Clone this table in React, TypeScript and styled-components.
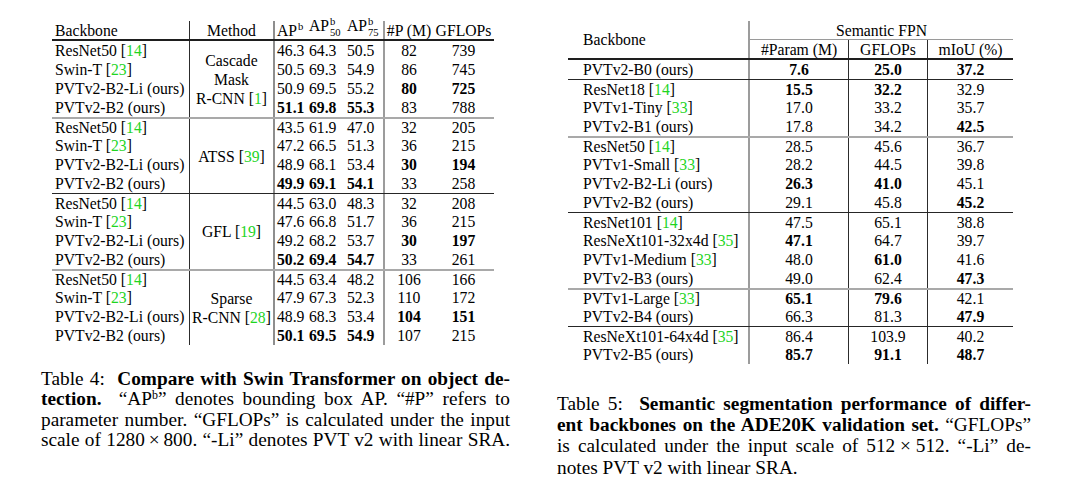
import React from 'react';
import styled, { createGlobalStyle } from 'styled-components';

type Rule = 'none' | 'dark' | 'soft';

const GlobalStyle = createGlobalStyle`
  html, body { margin: 0; padding: 0; background: #ffffff; }
  body {
    font-family: "Liberation Serif", "Times New Roman", serif;
    color: #000000;
  }
`;

const ruleCss = (r: Rule) =>
  r === 'dark' ? '1px solid #262626' : r === 'soft' ? '2px solid #a9a9a9' : 'none';
const ruleWidth = (r: Rule) => (r === 'dark' ? 1 : r === 'soft' ? 2 : 0);

const Page = styled.div`
  display: flex;
  align-items: flex-start;
  gap: 47px;
  width: 1078px;
  height: 486px;
  box-sizing: border-box;
  padding: 21px 0 0 41px;
  overflow: hidden;
`;

const Column = styled.div<{ $width: number }>`
  display: flex;
  flex-direction: column;
  width: ${p => p.$width}px;
`;

const TableBox = styled.div<{ $width: number; $indent: number }>`
  display: flex;
  flex-direction: column;
  width: ${p => p.$width}px;
  margin-left: ${p => p.$indent}px;
  font-size: 15.7px;
  line-height: 19px;
`;

const Band = styled.div<{ $cols: string; $rows: string; $rule: Rule; $under?: boolean }>`
  display: grid;
  grid-template-columns: ${p => p.$cols};
  grid-template-rows: ${p => p.$rows};
  border-top: ${p => ruleCss(p.$rule)};
  border-bottom: ${p => (p.$under ? '2px solid #1e1e1e' : 'none')};
`;

const NameCell = styled.div<{ $pad: number }>`
  display: flex;
  align-items: center;
  padding-left: ${p => p.$pad}px;
  white-space: nowrap;
`;

const MethodCell = styled.div<{ $span: number }>`
  grid-column: 2;
  grid-row: 1 / span ${p => p.$span};
  display: flex;
  flex-direction: column;
  align-items: center;
  justify-content: center;
  text-align: center;
  white-space: nowrap;
  border-left: 1px solid #2c2c2c;
  border-right: 2px solid #8e8e8e;
`;

const NumCell = styled.div<{ $pad: number; $bold?: boolean }>`
  display: flex;
  align-items: center;
  padding-left: ${p => p.$pad}px;
  font-weight: ${p => (p.$bold ? 700 : 400)};
  white-space: nowrap;
`;

const StatCell = styled.div<{ $edge?: 'dark' | 'soft'; $bold?: boolean }>`
  display: flex;
  align-items: center;
  justify-content: center;
  font-weight: ${p => (p.$bold ? 700 : 400)};
  white-space: nowrap;
  border-left: ${p =>
    p.$edge === 'dark' ? '1px solid #2c2c2c' : p.$edge === 'soft' ? '2px solid #9c9c9c' : 'none'};
`;

const SpanHead = styled.div`
  grid-column: 2 / span 3;
  grid-row: 1;
  display: flex;
  align-items: center;
  justify-content: center;
  border-left: 2px solid #9c9c9c;
  border-bottom: 1px solid #9a9a9a;
`;

const StackHead = styled.div`
  grid-column: 1;
  grid-row: 1 / span 2;
  display: flex;
  align-items: center;
  padding-left: 15px;
`;

const HeadLabel = styled.span`
  display: inline-flex;
  align-items: baseline;
`;

const Scripts = styled.span`
  display: inline-flex;
  flex-direction: column;
  align-items: flex-start;
  font-size: 10.6px;
  line-height: 11px;
  position: relative;
  top: -6px;
  margin-left: 1px;
`;

const CiteNum = styled.span`
  color: #1fd51f;
`;

const Caption = styled.div<{ $gap: number; $lead: number }>`
  margin-top: ${p => p.$gap}px;
  font-size: 19.3px;
  line-height: ${p => p.$lead}px;
`;

const CaptionLine = styled.div<{ $fill?: boolean }>`
  text-align: ${p => (p.$fill ? 'justify' : 'left')};
  text-align-last: ${p => (p.$fill ? 'justify' : 'left')};
`;

const Strong = styled.b`
  font-weight: 700;
`;

const CapSup = styled.sup`
  font-size: 0.62em;
  vertical-align: 0.5em;
  line-height: 0;
`;

const Ref = ({ n }: { n: string }) => (
  <>
    [<CiteNum>{n}</CiteNum>]
  </>
);

type Backbone = { name: string; cite?: string };

const Name = ({ b }: { b: Backbone }) => (
  <>
    {b.name}
    {b.cite ? (
      <>
        {' '}
        <Ref n={b.cite} />
      </>
    ) : null}
  </>
);

const isBold = (v: string) => v.startsWith('*');
const plain = (v: string) => (v.startsWith('*') ? v.slice(1) : v);

const ApHead = ({ sub }: { sub?: string }) => (
  <HeadLabel>
    AP
    <Scripts>
      <span>b</span>
      {sub ? <span>{sub}</span> : null}
    </Scripts>
  </HeadLabel>
);

/* ---------- Table 4 ---------- */

const LEFT_COLS = '137px 86px 31px 38px 39px 50px 61px';

type LeftGroup = {
  rule: Rule;
  method: React.ReactNode;
  rows: { b: Backbone; v: string[] }[];
};

const SWIN_ROWS = (vals: string[][]) => [
  { b: { name: 'ResNet50', cite: '14' }, v: vals[0] },
  { b: { name: 'Swin-T', cite: '23' }, v: vals[1] },
  { b: { name: 'PVTv2-B2-Li (ours)' }, v: vals[2] },
  { b: { name: 'PVTv2-B2 (ours)' }, v: vals[3] },
];

const LEFT_GROUPS: LeftGroup[] = [
  {
    rule: 'none',
    method: (
      <>
        <span>Cascade</span>
        <span>Mask</span>
        <span>
          R-CNN <Ref n="1" />
        </span>
      </>
    ),
    rows: SWIN_ROWS([
      ['46.3', '64.3', '50.5', '82', '739'],
      ['50.5', '69.3', '54.9', '86', '745'],
      ['50.9', '69.5', '55.2', '*80', '*725'],
      ['*51.1', '*69.8', '*55.3', '83', '788'],
    ]),
  },
  {
    rule: 'soft',
    method: (
      <span>
        ATSS <Ref n="39" />
      </span>
    ),
    rows: SWIN_ROWS([
      ['43.5', '61.9', '47.0', '32', '205'],
      ['47.2', '66.5', '51.3', '36', '215'],
      ['48.9', '68.1', '53.4', '*30', '*194'],
      ['*49.9', '*69.1', '*54.1', '33', '258'],
    ]),
  },
  {
    rule: 'dark',
    method: (
      <span>
        GFL <Ref n="19" />
      </span>
    ),
    rows: SWIN_ROWS([
      ['44.5', '63.0', '48.3', '32', '208'],
      ['47.6', '66.8', '51.7', '36', '215'],
      ['49.2', '68.2', '53.7', '*30', '*197'],
      ['*50.2', '*69.4', '*54.7', '33', '261'],
    ]),
  },
  {
    rule: 'soft',
    method: (
      <>
        <span>Sparse</span>
        <span>
          R-CNN <Ref n="28" />
        </span>
      </>
    ),
    rows: SWIN_ROWS([
      ['44.5', '63.4', '48.2', '106', '166'],
      ['47.9', '67.3', '52.3', '110', '172'],
      ['48.9', '68.3', '53.4', '*104', '*151'],
      ['*50.1', '*69.5', '*54.9', '107', '215'],
    ]),
  },
];

const rowTemplate = (rule: Rule, count: number) =>
  Array.from({ length: count }, (_, i) => `${i === 0 ? 19 - ruleWidth(rule) : 19}px`).join(' ');

const AP_PAD = [2, 3, 3];

const DetectionTable = () => (
  <TableBox $width={442} $indent={11}>
    <Band $cols={LEFT_COLS} $rows="18px" $rule="none" $under>
      <NameCell $pad={3}>Backbone</NameCell>
      <MethodCell $span={1}>Method</MethodCell>
      <NumCell $pad={2}>
        <ApHead />
      </NumCell>
      <NumCell $pad={3}>
        <ApHead sub="50" />
      </NumCell>
      <NumCell $pad={3}>
        <ApHead sub="75" />
      </NumCell>
      <StatCell $edge="soft">#P (M)</StatCell>
      <StatCell>GFLOPs</StatCell>
    </Band>
    {LEFT_GROUPS.map((g, gi) => (
      <Band key={gi} $cols={LEFT_COLS} $rows={rowTemplate(g.rule, g.rows.length)} $rule={g.rule}>
        <MethodCell $span={g.rows.length}>{g.method}</MethodCell>
        {g.rows.map((r, ri) => (
          <React.Fragment key={ri}>
            <NameCell $pad={3} style={{ gridRow: ri + 1, gridColumn: 1 }}>
              <Name b={r.b} />
            </NameCell>
            {r.v.slice(0, 3).map((v, vi) => (
              <NumCell key={vi} $pad={AP_PAD[vi]} $bold={isBold(v)} style={{ gridRow: ri + 1, gridColumn: vi + 3 }}>
                {plain(v)}
              </NumCell>
            ))}
            <StatCell $edge="soft" $bold={isBold(r.v[3])} style={{ gridRow: ri + 1, gridColumn: 6 }}>
              {plain(r.v[3])}
            </StatCell>
            <StatCell $bold={isBold(r.v[4])} style={{ gridRow: ri + 1, gridColumn: 7 }}>
              {plain(r.v[4])}
            </StatCell>
          </React.Fragment>
        ))}
      </Band>
    ))}
  </TableBox>
);

/* ---------- Table 5 ---------- */

const RIGHT_COLS = '180px 100px 79px 86px';

type RightGroup = { rule: Rule; rows: { b: Backbone; v: string[] }[] };

const RIGHT_GROUPS: RightGroup[] = [
  { rule: 'none', rows: [{ b: { name: 'PVTv2-B0 (ours)' }, v: ['*7.6', '*25.0', '*37.2'] }] },
  {
    rule: 'dark',
    rows: [
      { b: { name: 'ResNet18', cite: '14' }, v: ['*15.5', '*32.2', '32.9'] },
      { b: { name: 'PVTv1-Tiny', cite: '33' }, v: ['17.0', '33.2', '35.7'] },
      { b: { name: 'PVTv2-B1 (ours)' }, v: ['17.8', '34.2', '*42.5'] },
    ],
  },
  {
    rule: 'soft',
    rows: [
      { b: { name: 'ResNet50', cite: '14' }, v: ['28.5', '45.6', '36.7'] },
      { b: { name: 'PVTv1-Small', cite: '33' }, v: ['28.2', '44.5', '39.8'] },
      { b: { name: 'PVTv2-B2-Li (ours)' }, v: ['*26.3', '*41.0', '45.1'] },
      { b: { name: 'PVTv2-B2 (ours)' }, v: ['29.1', '45.8', '*45.2'] },
    ],
  },
  {
    rule: 'dark',
    rows: [
      { b: { name: 'ResNet101', cite: '14' }, v: ['47.5', '65.1', '38.8'] },
      { b: { name: 'ResNeXt101-32x4d', cite: '35' }, v: ['*47.1', '64.7', '39.7'] },
      { b: { name: 'PVTv1-Medium', cite: '33' }, v: ['48.0', '*61.0', '41.6'] },
      { b: { name: 'PVTv2-B3 (ours)' }, v: ['49.0', '62.4', '*47.3'] },
    ],
  },
  {
    rule: 'soft',
    rows: [
      { b: { name: 'PVTv1-Large', cite: '33' }, v: ['*65.1', '*79.6', '42.1'] },
      { b: { name: 'PVTv2-B4 (ours)' }, v: ['66.3', '81.3', '*47.9'] },
    ],
  },
  {
    rule: 'dark',
    rows: [
      { b: { name: 'ResNeXt101-64x4d', cite: '35' }, v: ['86.4', '103.9', '40.2'] },
      { b: { name: 'PVTv2-B5 (ours)' }, v: ['*85.7', '*91.1', '*48.7'] },
    ],
  },
];

const RIGHT_EDGES: ('dark' | 'soft')[] = ['soft', 'dark', 'dark'];

const SegmentationTable = () => (
  <TableBox $width={445} $indent={11}>
    <Band $cols={RIGHT_COLS} $rows="19px 18px" $rule="none" $under>
      <StackHead>Backbone</StackHead>
      <SpanHead>Semantic FPN</SpanHead>
      <StatCell $edge="soft" style={{ gridRow: 2, gridColumn: 2 }}>
        #Param (M)
      </StatCell>
      <StatCell $edge="dark" style={{ gridRow: 2, gridColumn: 3 }}>
        GFLOPs
      </StatCell>
      <StatCell $edge="dark" style={{ gridRow: 2, gridColumn: 4 }}>
        mIoU (%)
      </StatCell>
    </Band>
    {RIGHT_GROUPS.map((g, gi) => (
      <Band key={gi} $cols={RIGHT_COLS} $rows={rowTemplate(g.rule, g.rows.length)} $rule={g.rule}>
        {g.rows.map((r, ri) => (
          <React.Fragment key={ri}>
            <NameCell $pad={15}>
              <Name b={r.b} />
            </NameCell>
            {r.v.map((v, vi) => (
              <StatCell key={vi} $edge={RIGHT_EDGES[vi]} $bold={isBold(v)}>
                {plain(v)}
              </StatCell>
            ))}
          </React.Fragment>
        ))}
      </Band>
    ))}
  </TableBox>
);

export default function App() {
  return (
    <>
      <GlobalStyle />
      <Page>
        <Column $width={469}>
          <DetectionTable />
          <Caption $gap={24} $lead={20.4}>
            <CaptionLine $fill>
              Table 4:&nbsp; <Strong>Compare with Swin Transformer on object de-</Strong>
            </CaptionLine>
            <CaptionLine $fill>
              <Strong>tection.</Strong>&nbsp; “AP<CapSup>b</CapSup>” denotes bounding box AP. “#P” refers to
            </CaptionLine>
            <CaptionLine $fill>parameter number. “GFLOPs” is calculated under the input</CaptionLine>
            <CaptionLine $fill>
              scale of 1280{'\u2009'}×{'\u2009'}800. “-Li” denotes PVT v2 with linear SRA.
            </CaptionLine>
          </Caption>
        </Column>
        <Column $width={474}>
          <SegmentationTable />
          <Caption $gap={29} $lead={21.2}>
            <CaptionLine $fill>
              Table 5:&nbsp; <Strong>Semantic segmentation performance of differ-</Strong>
            </CaptionLine>
            <CaptionLine $fill>
              <Strong>ent backbones on the ADE20K validation set.</Strong> “GFLOPs”
            </CaptionLine>
            <CaptionLine $fill>
              is calculated under the input scale of 512{'\u2005'}×{'\u2005'}512. “-Li” de-
            </CaptionLine>
            <CaptionLine>notes PVT v2 with linear SRA.</CaptionLine>
          </Caption>
        </Column>
      </Page>
    </>
  );
}
